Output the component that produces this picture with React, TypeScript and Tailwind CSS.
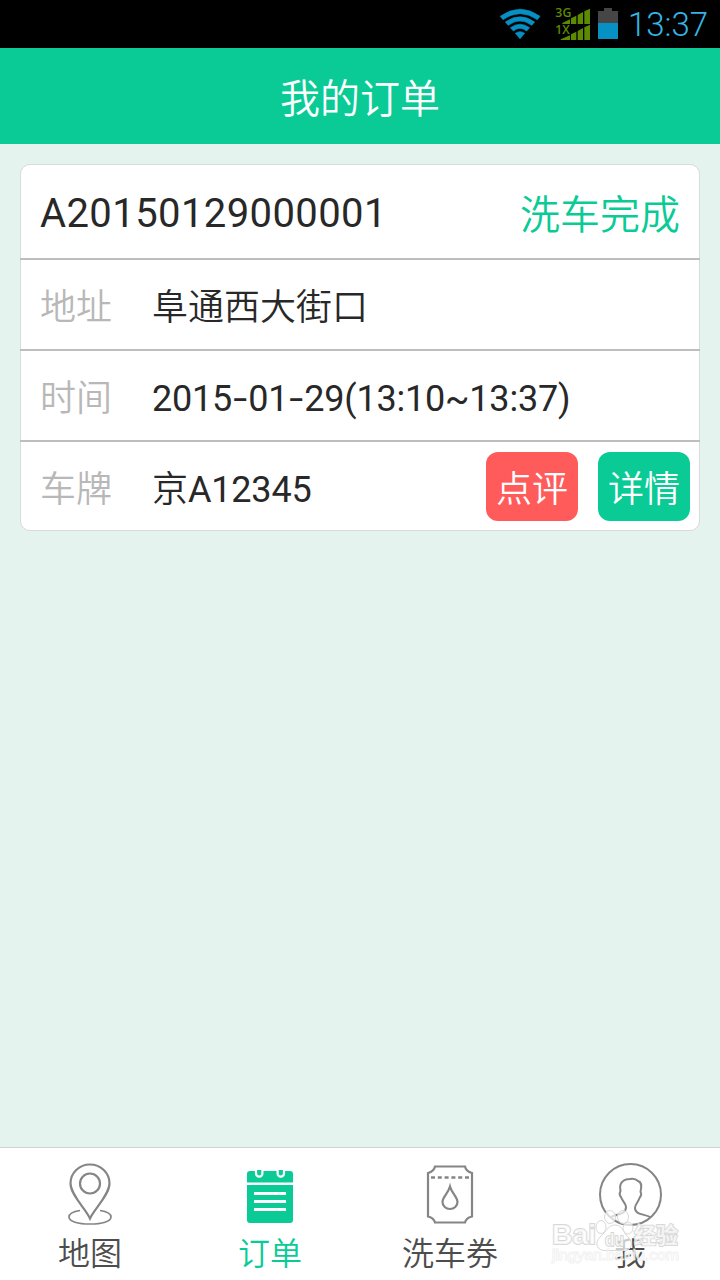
import React from 'react';

const FONT = "font-['Roboto','Noto_Sans_CJK_SC_DemiLight','Noto_Sans_CJK_SC',sans-serif]";

function WifiIcon() {
  return (
    <svg width="42" height="32" viewBox="0 0 126 96">
      <path d="M1 25Q60 -18 120 25L112 35Q60 -1 9 35Z M16 42Q60 11 104 42L95 52Q60 26 25 52Z M31 59Q60 38 89 59L80 69Q60 53 40 69Z M46 76Q60 66 74 76L60 92Z" fill="#0790c4" stroke="#0790c4" strokeWidth="2" />
    </svg>
  );
}

function SignalIcon() {
  return (
    <svg width="36" height="34" viewBox="0 0 108 102" fill="#5c8a00">
      <path d="M22 48V45L45 34V48Z M48 48V31L64 23V48Z M68 48V21L84 12V48Z M88 48V10L105 2V48Z" />
      <path d="M17 96V94L45 82V96Z M48 96V79L64 71V96Z M68 96V69L84 60V96Z M88 96V58L105 50V96Z" />
      <g fontFamily="Open Sans" fontWeight="600" fontSize="35" stroke="#000" strokeWidth="3" paintOrder="stroke">
        <text x="1" y="28" textLength="48" lengthAdjust="spacingAndGlyphs">3G</text>
        <text x="1" y="78" textLength="43" lengthAdjust="spacingAndGlyphs">1X</text>
      </g>
    </svg>
  );
}

function BatteryIcon() {
  return (
    <svg width="20" height="31" viewBox="0 0 20 31">
      <path d="M0 3H6V0H14V3H20V15H0Z" fill="#464646" />
      <path d="M0 15H20V31H0Z" fill="#0790c4" />
    </svg>
  );
}

function MapIcon() {
  return (
    <svg width="60" height="64" viewBox="0 0 60 64" fill="none" stroke="#858585" strokeWidth="2.2">
      <path d="M30 55.500 C26 46 10.500 32 10.500 20.500 A19.500 19 0 0 1 49.500 20.500 C49.500 32 34 46 30 55.500Z" />
      <circle cx="30" cy="20.500" r="10" />
      <path d="M20 47.500 C13 48.500 9 51 9 54 C9 58.500 18 61 30 61 S51 58.500 51 54 C51 51 47 48.500 40 47.500" strokeWidth="1.700" />
    </svg>
  );
}

function OrderIcon() {
  return (
    <svg width="60" height="64" viewBox="0 0 60 64">
      <path d="M7 19V11Q7 8 10 8H50Q53 8 53 11V19.500H7Z M7 22H53V57Q53 60 50 60H10Q7 60 7 57Z" fill="#0acb96" />
      <path d="M14 30.500H46 M14 38.500H46 M14 46.500H46" stroke="#fff" strokeWidth="2.800" />
      <path d="M16 7V10.500A3.200 3.200 0 0 0 22.400 10.500V7 M37.600 7V10.500A3.200 3.200 0 0 0 44 10.500V7" fill="#0acb96" stroke="#fff" strokeWidth="2.200" />
    </svg>
  );
}

function CouponIcon() {
  return (
    <svg width="60" height="64" viewBox="0 0 60 64" fill="none" stroke="#858585" strokeWidth="2.200">
      <path d="M15 3.500H45Q46 8.500 52 10V53.500Q46 55 45 59.500H15Q14 55 8 53.500V10Q14 8.500 15 3.500Z" />
      <path d="M11 14.500H50" strokeDasharray="4 2.800" strokeWidth="2.500" />
      <path d="M30 23.500C28 30.500 22.500 34.500 22.500 39A7.500 7 0 0 0 37.500 39C37.500 34.500 32 30.500 30 23.500Z" />
    </svg>
  );
}

function MeIcon() {
  return (
    <svg width="64" height="64" viewBox="0 0 64 64" fill="none" stroke="#858585" strokeWidth="2">
      <circle cx="32.500" cy="31.500" r="30.500" />
      <path d="M13 54C18 51 28 52 28 44C28 40 24 38 23 34C21 32 21.500 30 22.500 28C21 21 24 16 32 16C36 15 38 16 40 18C44 19 43.500 25 42.500 29C44 31 43 33 41.500 35C40.500 39 37 41 37 45C37 52 47 51 52 54" />
    </svg>
  );
}

function Watermark() {
  return (
    <svg
      className="absolute left-[548px] top-[52px]"
      width="140"
      height="66"
      viewBox="0 0 140 66"
      fill="#fff"
      fillOpacity="0.7"
      stroke="#d9d9d9"
      strokeWidth="1"
    >
      <ellipse cx="53" cy="27" rx="5" ry="6.500" />
      <ellipse cx="62" cy="17" rx="5.500" ry="6.500" />
      <ellipse cx="75" cy="17" rx="5.500" ry="6.500" />
      <ellipse cx="80" cy="28" rx="5" ry="6" />
      <path d="M67 25C60 25 58 32 52 37C46 43 49 51 57 50.500H75C84 51 86 43 80 37C75 32 74 25 67 25Z" />
      <g fontFamily="Liberation Sans" fontWeight="700" paintOrder="stroke" strokeWidth="1.800">
        <text x="4" y="44" fontSize="28" textLength="44" lengthAdjust="spacingAndGlyphs">Bai</text>
        <text x="57" y="46" fontSize="18" textLength="19" lengthAdjust="spacingAndGlyphs" strokeWidth="1.500" stroke="#cfcfcf">du</text>
        <text x="86" y="43" fontSize="22" fontFamily="Noto Sans CJK SC" textLength="44">经验</text>
      </g>
      <text x="4" y="60" fontFamily="Liberation Sans" fontSize="14.500" strokeWidth="1" stroke="#e4e4e4" strokeOpacity="0.7" paintOrder="stroke" textLength="127" lengthAdjust="spacingAndGlyphs">
        jingyan.baidu.com
      </text>
    </svg>
  );
}

function InfoRow({ label, value, children }: { label: string; value: React.ReactNode; children?: React.ReactNode }) {
  return (
    <div className="-mx-px flex h-[91px] items-center border-t-2 border-[#bdbdbd] pl-5 pr-[10px] text-[36px] leading-[54px]">
      <span className="w-28 pt-[7px] text-[#b8b8b8]">{label}</span>
      <span className="flex-1 whitespace-nowrap pt-[6px] text-[#282828]">{value}</span>
      {children}
    </div>
  );
}

function Dash() {
  return <span className="inline-block w-4 scale-x-140 text-center">-</span>;
}

const tabs = [
  { label: '地图', icon: <MapIcon /> },
  { label: '订单', icon: <OrderIcon />, active: true },
  { label: '洗车券', icon: <CouponIcon /> },
  { label: '我', icon: <MeIcon /> },
];

export default function App() {
  return (
    <div className={`flex h-[1280px] w-[720px] flex-col overflow-hidden bg-[#e4f3ee] font-[350] ${FONT}`}>
      <div className="flex h-12 shrink-0 items-start justify-end bg-black pr-3">
        <div className="mr-[13px] pt-2"><WifiIcon /></div>
        <div className="mr-[7px] pt-2"><SignalIcon /></div>
        <div className="mr-[10px] pt-2"><BatteryIcon /></div>
        <span className="w-[80px] whitespace-nowrap text-[33px] leading-[50px] text-[#33b5e5]">13:37</span>
      </div>

      <header className="flex h-24 shrink-0 items-center justify-center bg-[#0acb96]">
        <h1 className="pt-[7px] text-[40px] leading-[60px] text-white">我的订单</h1>
      </header>

      <main className="flex-1 px-5 pt-5">
        <div className="h-[367px] rounded-[10px] border border-[#dadada] bg-white">
          <div className="flex h-[93px] items-center justify-between px-[19px] text-[40px] leading-[60px]">
            <span className="pt-1 font-normal tracking-[0.4px] text-[#282828]">A20150129000001</span>
            <span className="pt-2 text-[#0acb96]">洗车完成</span>
          </div>
          <InfoRow label="地址" value="阜通西大街口" />
          <InfoRow label="时间" value={<span className="font-normal tracking-[-0.2px]">2015<Dash />01<Dash />29(13:10~13:37)</span>} />
          <InfoRow label="车牌" value={<>京<span className="font-normal tracking-[-0.2px]">A12345</span></>}>
            <div className="flex gap-5">
              <button type="button" className="h-[69px] w-[92px] rounded-xl bg-[#ff5b5b] pt-[7px] text-white">点评</button>
              <button type="button" className="h-[69px] w-[92px] rounded-xl bg-[#0acb96] pt-[7px] text-white">详情</button>
            </div>
          </InfoRow>
        </div>
      </main>

      <nav className="relative grid h-[133px] shrink-0 grid-cols-4 border-t border-[#cbd8d0] bg-white">
        {tabs.map((tab) => (
          <div
            key={tab.label}
            className={`flex flex-col items-center pt-[15px] text-[32px] leading-[48px] ${tab.active ? 'text-[#0acb96]' : 'text-[#4d4d4d]'}`}
          >
            {tab.icon}
            <span className="pt-[3px]">{tab.label}</span>
          </div>
        ))}
        <Watermark />
      </nav>
    </div>
  );
}
